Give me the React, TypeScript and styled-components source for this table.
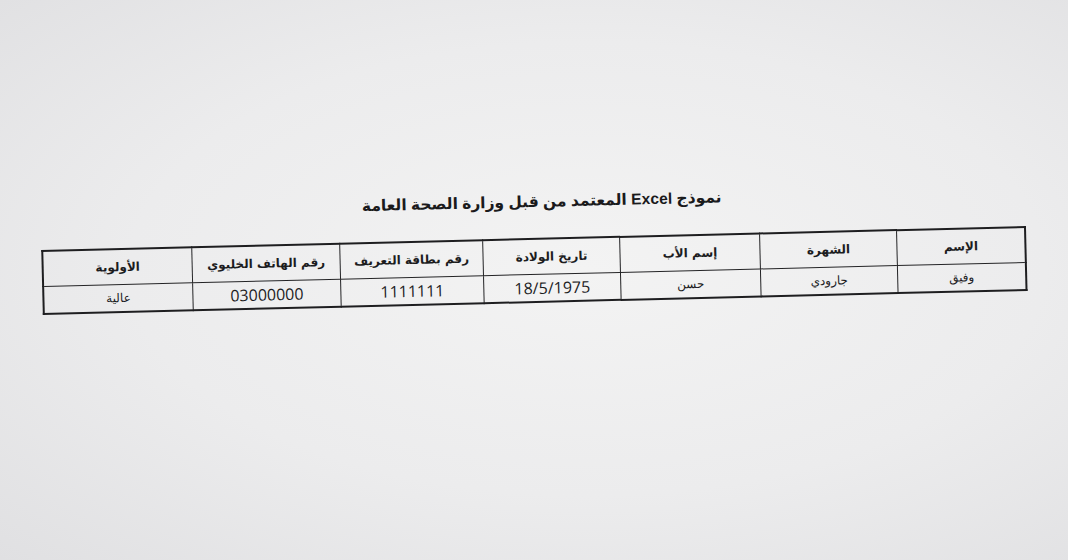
import styled, { createGlobalStyle } from "styled-components";

const Global = createGlobalStyle`
  html, body {
    margin: 0;
    padding: 0;
  }
  body {
    width: 1068px;
    height: 560px;
    overflow: hidden;
    font-family: "Liberation Sans", "DejaVu Sans", sans-serif;
  }
`;

const Paper = styled.div`
  width: 1068px;
  height: 560px;
  background: radial-gradient(ellipse at 55% 48%, #f3f3f3 0%, #ececed 55%, #e0e0e2 100%);
  display: flex;
  justify-content: center;
  padding-top: 193px;
  box-sizing: border-box;
`;

const Sheet = styled.div`
  width: 975px;
  display: flex;
  flex-direction: column;
  align-items: center;
  transform: rotate(-1.4deg);
  transform-origin: center top;
  margin-left: -4px;
`;

const Title = styled.h1`
  margin: 0 0 27px 18px;
  direction: rtl;
  font-family: "Liberation Sans", "DejaVu Sans", sans-serif;
  font-weight: 700;
  font-size: 15.5px;
  color: #1a1a1c;
  letter-spacing: 0.1px;
`;

const Table = styled.table`
  width: 100%;
  direction: rtl;
  border-collapse: collapse;
  border: 2px solid #1e1e20;
  table-layout: fixed;
`;

const Head = styled.th<{ $w?: number }>`
  width: ${(p) => (p.$w ? `${p.$w}px` : "auto")};
  height: 34px;
  border: 1.5px solid #242426;
  font-family: "DejaVu Sans", sans-serif;
  font-weight: 700;
  font-size: 12px;
  color: #1c1c1e;
  text-align: center;
  vertical-align: middle;
  padding: 0;
`;

const Cell = styled.td<{ $num?: boolean }>`
  height: 26px;
  border: 1.5px solid #242426;
  font-family: ${(p) => (p.$num ? `"Open Sans", "Liberation Sans", sans-serif` : `"DejaVu Sans", sans-serif`)};
  font-size: ${(p) => (p.$num ? "16px" : "12px")};
  color: #1c1c1e;
  text-align: center;
  vertical-align: middle;
  padding: 0;
`;

const columns = [
  { head: "الإسم", value: "وفيق", num: false, w: 127 },
  { head: "الشهرة", value: "جارودي", num: false, w: 136 },
  { head: "إسم الأب", value: "حسن", num: false, w: 139 },
  { head: "تاريخ الولادة", value: "18/5/1975", num: true, w: 136 },
  { head: "رقم بطاقة التعريف", value: "1111111", num: true, w: 142 },
  { head: "رقم الهاتف الخليوي", value: "03000000", num: true, w: 147 },
  { head: "الأولوية", value: "عالية", num: false, w: 148 },
];

export default function App() {
  return (
    <>
      <Global />
      <Paper>
        <Sheet>
          <Title>نموذج Excel المعتمد من قبل وزارة الصحة العامة</Title>
          <Table>
            <thead>
              <tr>
                {columns.map((c) => (
                  <Head key={c.head} $w={c.w}>
                    {c.head}
                  </Head>
                ))}
              </tr>
            </thead>
            <tbody>
              <tr>
                {columns.map((c) => (
                  <Cell key={c.head} $num={c.num}>
                    {c.value}
                  </Cell>
                ))}
              </tr>
            </tbody>
          </Table>
        </Sheet>
      </Paper>
    </>
  );
}
